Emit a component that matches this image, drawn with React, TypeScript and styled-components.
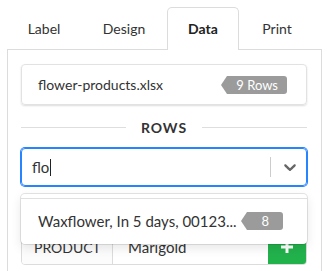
import React from "react";
import styled, { createGlobalStyle, css } from "styled-components";

const Global = createGlobalStyle`
  html, body { margin: 0; padding: 0; background: #fff; }
  body { font-family: Lato, "Open Sans", sans-serif; color: #333; }
`;

const Page = styled.div`
  width: 327px;
  height: 271px;
  overflow: hidden;
  box-sizing: border-box;
  padding: 7px 5px 0 7px;
`;

const TabBar = styled.div`
  display: flex;
  gap: 2px;
  height: 43px;
  margin-bottom: -1px;
  position: relative;
  z-index: 1;
`;

const Tab = styled.div<{ $active?: boolean; $w: number }>`
  box-sizing: border-box;
  width: ${(p) => p.$w}px;
  height: 43px;
  display: flex;
  align-items: center;
  justify-content: center;
  padding-bottom: 1px;
  font-size: 14px;
  color: #333;
  border: 1px solid transparent;
  border-bottom: none;
  border-radius: 5px 5px 0 0;
  ${(p) =>
    p.$active &&
    css`
      background: #fff;
      border-color: #dcdcdc;
      font-weight: 700;
      color: #222;
    `}
`;

const Panel = styled.div`
  position: relative;
  box-sizing: border-box;
  width: 315px;
  height: 240px;
  border: 1px solid #dcdcdc;
  border-bottom: none;
  padding: 14px 14px 0 13px;
`;

const FileCard = styled.div`
  box-sizing: border-box;
  height: 41px;
  border: 1px solid #e2e2e2;
  border-radius: 4px;
  box-shadow: 0 1px 2px rgba(0, 0, 0, 0.14);
  display: flex;
  align-items: center;
  justify-content: space-between;
  padding: 0 19px 0 16px;
  font-size: 14px;
`;

const Tag = styled.span<{ $pad?: number }>`
  position: relative;
  height: 18px;
  display: inline-flex;
  align-items: center;
  justify-content: center;
  padding: 0 ${(p) => p.$pad ?? 9}px;
  margin-left: 8px;
  background: #9b9b9b;
  color: #fff;
  font-size: 13px;
  border-radius: 0 3px 3px 0;
  &::before {
    content: "";
    position: absolute;
    left: -6px;
    top: 0;
    border-style: solid;
    border-width: 9px 6px 9px 0;
    border-color: transparent #9b9b9b transparent transparent;
  }
`;

const Heading = styled.div`
  margin-top: 12px;
  height: 20px;
  display: flex;
  align-items: center;
  gap: 15px;
  font-size: 14px;
  font-weight: 700;
  letter-spacing: 1px;
  color: #333;
  &::before,
  &::after {
    content: "";
    flex: 1;
    height: 1px;
    background: #dedede;
  }
`;

const SelectWrap = styled.div`
  position: relative;
  z-index: 2;
  margin-top: 11px;
`;

const Control = styled.div`
  box-sizing: border-box;
  height: 38px;
  border: 1px solid #2684ff;
  box-shadow: 0 0 0 1px #2684ff;
  border-radius: 4px;
  display: flex;
  align-items: center;
`;

const InputText = styled.div`
  flex: 1;
  padding: 0 10px;
  font-size: 15px;
  color: #333;
  display: flex;
  align-items: center;
`;

const Caret = styled.span`
  display: inline-block;
  width: 1px;
  height: 17px;
  background: #222;
  margin-left: 1px;
`;

const Separator = styled.span`
  width: 1px;
  height: 20px;
  background: #ccc;
`;

const Indicator = styled.div`
  box-sizing: border-box;
  width: 35px;
  padding-left: 9px;
  display: flex;
  align-items: center;
  color: #666;
`;

const Menu = styled.div`
  position: absolute;
  left: 0;
  right: 0;
  top: calc(100% + 8px);
  background: #fff;
  border-radius: 4px;
  box-shadow: 0 0 0 1px rgba(0, 0, 0, 0.1), 0 4px 11px rgba(0, 0, 0, 0.1);
  padding: 4px 0 0;
`;

const Option = styled.div`
  box-sizing: border-box;
  height: 46px;
  border-top: 1px solid #e0e0e0;
  display: flex;
  align-items: center;
  justify-content: space-between;
  padding: 0 24px 2px 17px;
  font-size: 15px;
  color: #333;
`;

const FieldRow = styled.div`
  box-sizing: border-box;
  margin-top: 43px;
  height: 36px;
  border: 1px solid #dcdcdc;
  border-radius: 4px;
  display: flex;
  overflow: hidden;
`;

const FieldLabel = styled.div`
  width: 91px;
  border-right: 1px solid #dcdcdc;
  display: flex;
  align-items: center;
  padding-left: 12px;
  box-sizing: border-box;
  font-size: 14px;
  color: #333;
  background: #fcfcfc;
`;

const FieldValue = styled.div`
  flex: 1;
  display: flex;
  align-items: center;
  padding-left: 15px;
  font-size: 15px;
  color: #333;
`;

const AddButton = styled.div`
  width: 38px;
  background: #22b24c;
  display: flex;
  align-items: center;
  justify-content: center;
  color: #fff;
`;

export default function App() {
  return (
    <>
      <Global />
      <Page>
        <TabBar>
          <Tab $w={74}>Label</Tab>
          <Tab $w={82}>Design</Tab>
          <Tab $w={72} $active>
            Data
          </Tab>
          <Tab $w={72}>Print</Tab>
        </TabBar>
        <Panel>
          <FileCard>
            <span>flower-products.xlsx</span>
            <Tag>9 Rows</Tag>
          </FileCard>
          <Heading>ROWS</Heading>
          <SelectWrap>
            <Control>
              <InputText>
                flo
                <Caret />
              </InputText>
              <Separator />
              <Indicator>
                <svg width="20" height="20" viewBox="0 0 20 20" fill="currentColor">
                  <path d="M4.516 7.548c0.436-0.446 1.043-0.481 1.576 0l3.908 3.747 3.908-3.747c0.533-0.481 1.141-0.446 1.574 0 0.436 0.445 0.408 1.197 0 1.615-0.406 0.418-4.695 4.502-4.695 4.502-0.217 0.223-0.502 0.335-0.787 0.335s-0.57-0.112-0.789-0.335c0 0-4.287-4.084-4.695-4.502s-0.436-1.17 0-1.615z" />
                </svg>
              </Indicator>
            </Control>
            <Menu>
              <Option>
                <span>Waxflower, In 5 days, 00123...</span>
                <Tag $pad={14}>8</Tag>
              </Option>
            </Menu>
          </SelectWrap>
          <FieldRow>
            <FieldLabel>PRODUCT</FieldLabel>
            <FieldValue>Marigold</FieldValue>
            <AddButton>
              <svg width="14" height="14" viewBox="0 0 14 14">
                <path d="M7 1v12M1 7h12" stroke="currentColor" strokeWidth="3" />
              </svg>
            </AddButton>
          </FieldRow>
        </Panel>
      </Page>
    </>
  );
}
